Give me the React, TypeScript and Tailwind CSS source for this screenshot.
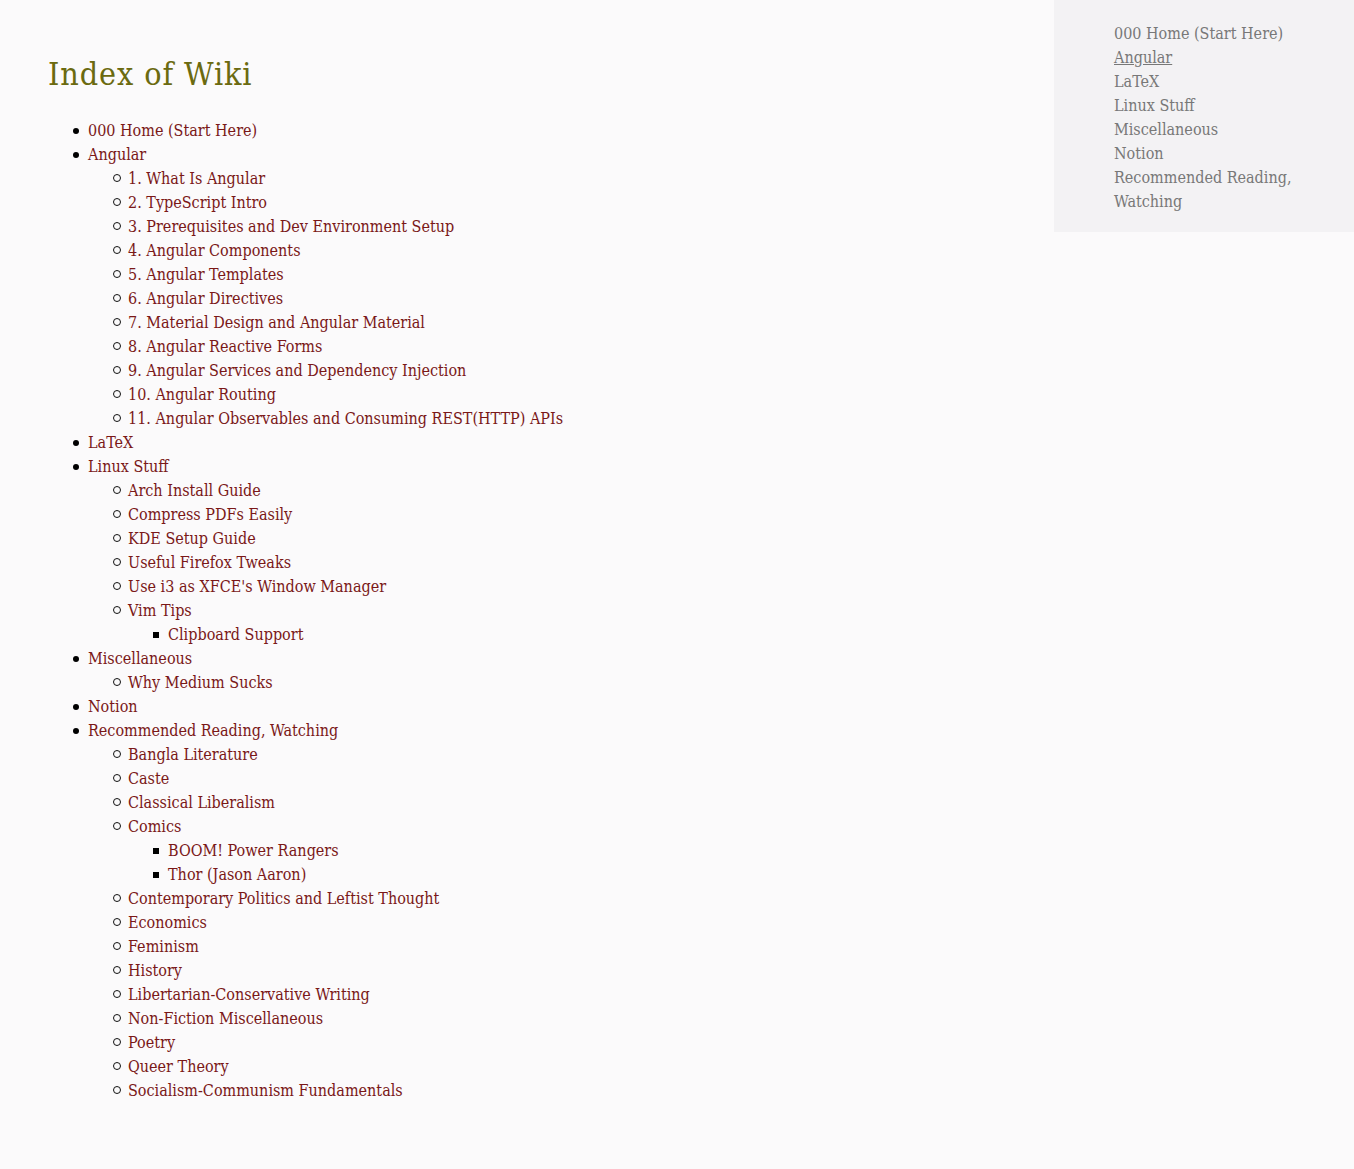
import React from "react";

type Item = { t: string; c?: Item[] };

const data: Item[] = [
  { t: "000 Home (Start Here)" },
  {
    t: "Angular",
    c: [
      { t: "1. What Is Angular" },
      { t: "2. TypeScript Intro" },
      { t: "3. Prerequisites and Dev Environment Setup" },
      { t: "4. Angular Components" },
      { t: "5. Angular Templates" },
      { t: "6. Angular Directives" },
      { t: "7. Material Design and Angular Material" },
      { t: "8. Angular Reactive Forms" },
      { t: "9. Angular Services and Dependency Injection" },
      { t: "10. Angular Routing" },
      { t: "11. Angular Observables and Consuming REST(HTTP) APIs" },
    ],
  },
  { t: "LaTeX" },
  {
    t: "Linux Stuff",
    c: [
      { t: "Arch Install Guide" },
      { t: "Compress PDFs Easily" },
      { t: "KDE Setup Guide" },
      { t: "Useful Firefox Tweaks" },
      { t: "Use i3 as XFCE's Window Manager" },
      { t: "Vim Tips", c: [{ t: "Clipboard Support" }] },
    ],
  },
  { t: "Miscellaneous", c: [{ t: "Why Medium Sucks" }] },
  { t: "Notion" },
  {
    t: "Recommended Reading, Watching",
    c: [
      { t: "Bangla Literature" },
      { t: "Caste" },
      { t: "Classical Liberalism" },
      {
        t: "Comics",
        c: [{ t: "BOOM! Power Rangers" }, { t: "Thor (Jason Aaron)" }],
      },
      { t: "Contemporary Politics and Leftist Thought" },
      { t: "Economics" },
      { t: "Feminism" },
      { t: "History" },
      { t: "Libertarian-Conservative Writing" },
      { t: "Non-Fiction Miscellaneous" },
      { t: "Poetry" },
      { t: "Queer Theory" },
      { t: "Socialism-Communism Fundamentals" },
    ],
  },
];

function Marker({ depth }: { depth: number }) {
  if (depth === 0)
    return (
      <span className="inline-block w-[6px] h-[6px] rounded-full bg-black -ml-[15px] mr-[9px] align-[2px]" />
    );
  if (depth === 1)
    return (
      <span className="inline-block w-[8px] h-[8px] rounded-full border border-[#111] -ml-[15px] mr-[7px] align-[2px]" />
    );
  return (
    <span className="inline-block w-[6px] h-[6px] bg-black -ml-[15px] mr-[9px] align-[2px]" />
  );
}

function List({ items, depth }: { items: Item[]; depth: number }) {
  return (
    <ul className="list-none pl-10">
      {items.map((it) => (
        <li key={it.t}>
          <Marker depth={depth} />
          <a className="text-[#7a1818] no-underline" href="#">
            {it.t}
          </a>
          {it.c && <List items={it.c} depth={depth + 1} />}
        </li>
      ))}
    </ul>
  );
}

const side = [
  "000 Home (Start Here)",
  "Angular",
  "LaTeX",
  "Linux Stuff",
  "Miscellaneous",
  "Notion",
  "Recommended Reading, Watching",
];

export default function App() {
  return (
    <div
      className="min-h-[1169px] bg-[#fbfafb] text-[16px] leading-[24px] text-black flex"
      style={{ fontFamily: '"Roboto Slab", "DejaVu Serif Condensed", "DejaVu Serif", serif' }}
    >
      <main className="flex-1 pl-12 pt-[54px]">
        <h1 className="text-[32px] leading-[40px] text-[#6b6a10] font-normal tracking-[0.9px] mb-[25px]">
          Index of Wiki
        </h1>
        <List items={data} depth={0} />
      </main>
      <aside className="w-[300px] self-start bg-[#f3f2f4] pt-[22px] pb-[18px] pl-[60px] pr-[40px]">
        <ul>
          {side.map((s) => (
            <li key={s}>
              <a
                href="#"
                className={`text-[#787878] ${s === "Angular" ? "underline" : "no-underline"}`}
              >
                {s}
              </a>
            </li>
          ))}
        </ul>
      </aside>
    </div>
  );
}
